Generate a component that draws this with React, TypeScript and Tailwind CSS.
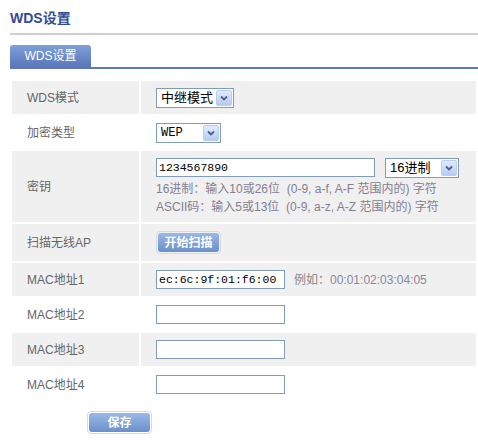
import type { ReactNode } from "react";

const sans = "font-['Liberation_Sans','Noto_Sans_CJK_SC',sans-serif]";
const mono = "font-['Liberation_Mono','Noto_Sans_CJK_SC',monospace]";

function DropArrow() {
  return (
    <span className="flex h-[16px] w-[16px] shrink-0 items-center justify-center rounded-[2px] border border-[#b9cdf3] bg-gradient-to-b from-[#e2ebfd] to-[#b6cbf4]">
      <svg width="8" height="6" viewBox="0 0 8 6">
        <path d="M1 1.5 L4 4.5 L7 1.5" fill="none" stroke="#4a5f8c" strokeWidth="1.8" />
      </svg>
    </span>
  );
}

function Select({ value, width, font = sans, size = "text-[13px]" }: { value: string; width: string; font?: string; size?: string }) {
  return (
    <div className={`flex h-[20px] items-center justify-between border border-[#7f9db9] bg-white pl-[4px] pr-[1px] ${width}`}>
      <span className={`${font} ${size} leading-none text-black`}>{value}</span>
      <DropArrow />
    </div>
  );
}

function TextBox({ value = "", width = "w-[129px]" }: { value?: string; width?: string }) {
  return (
    <div className={`flex h-[19px] items-center border border-[#7f9db9] bg-white px-[2px] ${width}`}>
      <span className={`${mono} text-[11.5px] leading-none text-black`}>{value}</span>
    </div>
  );
}

function BlueButton({ label, width }: { label: string; width: string }) {
  return (
    <div className={`rounded-[4px] border border-[#d4dbe6] p-[1px] ${width}`}>
      <div className="flex h-[19px] items-center justify-center rounded-[3px] bg-gradient-to-b from-[#99b9e8] to-[#6a8fcb]">
        <span className={`${sans} text-[12px] font-bold leading-none text-white`}>{label}</span>
      </div>
    </div>
  );
}

function Row({ label, height, shaded, children }: { label: string; height: string; shaded: boolean; children: ReactNode }) {
  const bg = shaded ? "bg-[#f0f0f0]" : "bg-white";
  return (
    <>
      <div className={`flex items-center pl-[15px] ${height} ${bg}`}>
        <span className={`${sans} text-[12px] text-[#666]`}>{label}</span>
      </div>
      <div className={`flex items-center pl-[15px] ${height} ${bg}`}>{children}</div>
    </>
  );
}

export default function App() {
  return (
    <div className={`h-[442px] w-[478px] overflow-hidden bg-white pl-[10px] ${sans}`}>
      <h1 className="pt-[9px] text-[14px] font-bold leading-[18px] text-[#2f4d95]">WDS设置</h1>
      <div className="mt-[6px] h-[2px] bg-[#cfcfcf]" />

      <div className="mt-[10px] flex items-end border-b-2 border-[#5f78b7]">
        <div className="flex h-[22px] w-[81px] items-center justify-center rounded-t-[3px] bg-gradient-to-b from-[#7f9fd8] to-[#5a77bb]">
          <span className="text-[12px] leading-none text-white">WDS设置</span>
        </div>
      </div>

      <div className="mt-[10px] grid grid-cols-[127px_1fr] gap-[2px] p-[2px]">
        <Row label="WDS模式" height="h-[33px]" shaded>
          <Select value="中继模式" width="w-[78px]" />
        </Row>
        <Row label="加密类型" height="h-[33px]" shaded={false}>
          <Select value="WEP" width="w-[65px]" font={mono} size="text-[12px]" />
        </Row>
        <Row label="密钥" height="h-[71px]" shaded>
          <div className="flex flex-col">
            <div className="flex items-center gap-[10px]">
              <TextBox value="1234567890" width="w-[219px]" />
              <Select value="16进制" width="w-[74px]" />
            </div>
            <p className="mt-[2px] whitespace-pre text-[12px] leading-[18px] text-[#857f92]">
              {"16进制：输入10或26位  (0-9, a-f, A-F 范围内的) 字符"}
            </p>
            <p className="whitespace-pre text-[12px] leading-[18px] text-[#857f92]">
              {"ASCII码：输入5或13位  (0-9, a-z, A-Z 范围内的) 字符"}
            </p>
          </div>
        </Row>
        <Row label="扫描无线AP" height="h-[37px]" shaded>
          <BlueButton label="开始扫描" width="w-[65px]" />
        </Row>
        <Row label="MAC地址1" height="h-[33px]" shaded>
          <TextBox value="ec:6c:9f:01:f6:00" />
          <span className="ml-[9px] text-[12px] text-[#888]">例如：</span>
          <span className="text-[12px] text-[#8a86a0]">00:01:02:03:04:05</span>
        </Row>
        <Row label="MAC地址2" height="h-[33px]" shaded={false}>
          <TextBox />
        </Row>
        <Row label="MAC地址3" height="h-[33px]" shaded>
          <TextBox />
        </Row>
        <Row label="MAC地址4" height="h-[33px]" shaded={false}>
          <TextBox />
        </Row>
      </div>

      <div className="mt-[8px] pl-[77px]">
        <BlueButton label="保存" width="w-[65px]" />
      </div>
    </div>
  );
}
